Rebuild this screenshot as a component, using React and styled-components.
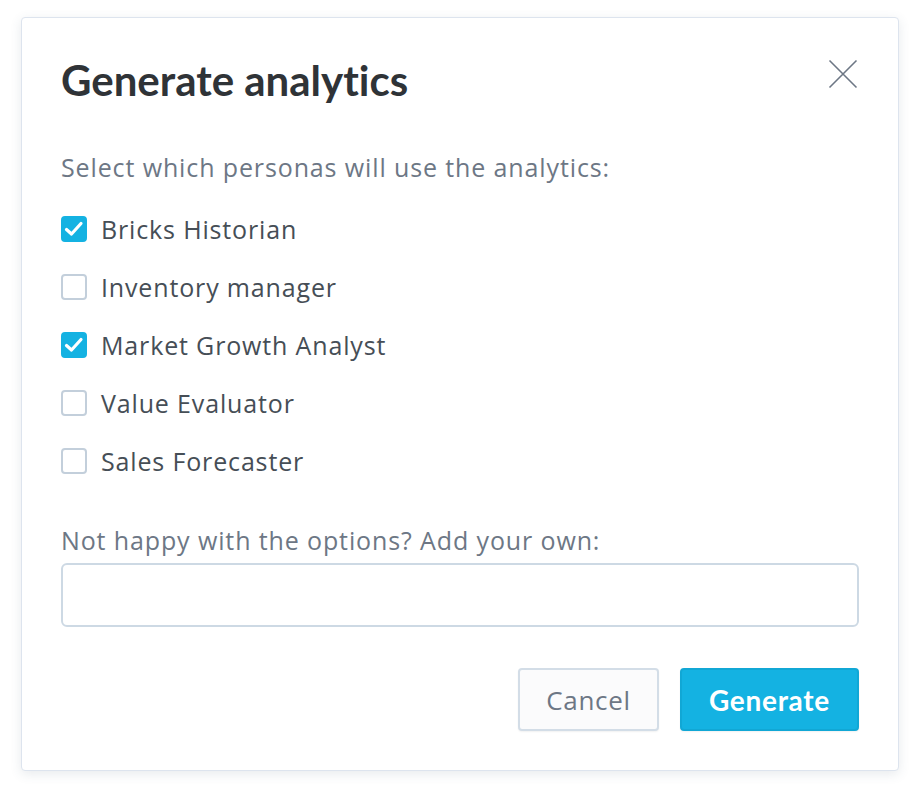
import React, { useState } from "react";
import styled, { createGlobalStyle } from "styled-components";

const Global = createGlobalStyle`
  html, body { margin: 0; padding: 0; background: #ffffff; }
  body { font-family: "Open Sans", Lato, sans-serif; font-variant-ligatures: none; }
  * { box-sizing: border-box; }
`;

const Page = styled.div`
  width: 920px;
  height: 796px;
  padding: 17px 21px 0 21px;
`;

const Dialog = styled.div`
  width: 878px;
  background: #ffffff;
  border: 1px solid #dde4ee;
  border-radius: 4px;
  box-shadow: 0 3px 12px rgba(60, 80, 110, 0.12);
  padding: 38px 39px 39px 39px;
  display: flex;
  flex-direction: column;
`;

const Header = styled.div`
  display: flex;
  justify-content: space-between;
  align-items: flex-start;
  height: 48px;
`;

const Title = styled.h1`
  margin: 0;
  font-family: Lato, "Open Sans", sans-serif;
  font-weight: 700;
  font-size: 42px;
  line-height: 48px;
  font-variant-ligatures: none;
  color: #2f3337;
`;

const Close = styled.button`
  border: 0;
  background: none;
  padding: 0;
  width: 32px;
  height: 32px;
  margin-top: 2px;
  cursor: pointer;
  display: flex;
  align-items: center;
  justify-content: center;
`;

const Label = styled.div`
  font-family: "Open Sans", sans-serif;
  font-size: 25px;
  letter-spacing: 0.88px;
  line-height: 32px;
  color: #6d7785;
  margin-top: ${(p) => p.$top}px;
`;

const List = styled.div`
  display: flex;
  flex-direction: column;
  gap: 26px;
  margin-top: 30px;
`;

const Row = styled.label`
  display: flex;
  align-items: center;
  gap: 14px;
  height: 32px;
  font-family: "Open Sans", sans-serif;
  font-size: 25px;
  letter-spacing: 0.85px;
  color: #464e56;
  cursor: pointer;
  user-select: none;
`;

const Box = styled.span`
  width: 26px;
  height: 26px;
  border-radius: 4px;
  border: 2px solid ${(p) => (p.$on ? "#14b2e2" : "#c3cfdb")};
  background: ${(p) => (p.$on ? "#14b2e2" : "#ffffff")};
  display: flex;
  align-items: center;
  justify-content: center;
  flex: none;
`;

const Input = styled.input`
  margin-top: 7px;
  width: 100%;
  height: 64px;
  border: 2px solid #cdd9e4;
  border-radius: 6px;
  font-family: "Open Sans", sans-serif;
  font-size: 24px;
  color: #464e56;
  padding: 0 16px;
  outline: none;
`;

const Footer = styled.div`
  margin-top: 41px;
  display: flex;
  justify-content: flex-end;
  gap: 21px;
`;

const Button = styled.button`
  width: ${(p) => p.$w}px;
  height: 63px;
  padding: 0;
  border-radius: 4px;
  font-family: ${(p) => (p.$primary ? "Lato, sans-serif" : "'Open Sans', sans-serif")};
  font-size: ${(p) => (p.$primary ? 28 : 26)}px;
  letter-spacing: 0.7px;
  font-weight: ${(p) => (p.$primary ? 700 : 400)};
  color: ${(p) => (p.$primary ? "#ffffff" : "#6d7785")};
  background: ${(p) => (p.$primary ? "#14b2e2" : "#fbfbfc")};
  border: 2px solid ${(p) => (p.$primary ? "#11a7d5" : "#d3dde7")};
  box-shadow: 0 1px 2px rgba(0, 0, 0, 0.06);
  cursor: pointer;
`;

const personas = [
  ["Bricks Historian", true],
  ["Inventory manager", false],
  ["Market Growth Analyst", true],
  ["Value Evaluator", false],
  ["Sales Forecaster", false],
];

export default function App() {
  const [state, setState] = useState(personas.map((p) => p[1]));
  return (
    <Page>
      <Global />
      <Dialog>
        <Header>
          <Title>Generate analytics</Title>
          <Close aria-label="Close">
            <svg width="32" height="32" viewBox="0 0 32 32">
              <path d="M2.5 2.5 L29.5 29.5 M29.5 2.5 L2.5 29.5" stroke="#6d7785" strokeWidth="1.6" fill="none" />
            </svg>
          </Close>
        </Header>
        <Label $top={47}>Select which personas will use the analytics:</Label>
        <List>
          {personas.map(([name], i) => (
            <Row key={name} onClick={() => setState((s) => s.map((v, j) => (j === i ? !v : v)))}>
              <Box $on={state[i]}>
                {state[i] && (
                  <svg width="22" height="22" viewBox="0 0 22 22">
                    <path d="M3.5 11.5 L8.5 16 L18 5.5" stroke="#fff" strokeWidth="3.2" fill="none" strokeLinecap="round" strokeLinejoin="round" />
                  </svg>
                )}
              </Box>
              {name}
            </Row>
          ))}
        </List>
        <Label $top={47}>Not happy with the options? Add your own:</Label>
        <Input />
        <Footer>
          <Button $w={141}>Cancel</Button>
          <Button $w={179} $primary>Generate</Button>
        </Footer>
      </Dialog>
    </Page>
  );
}
